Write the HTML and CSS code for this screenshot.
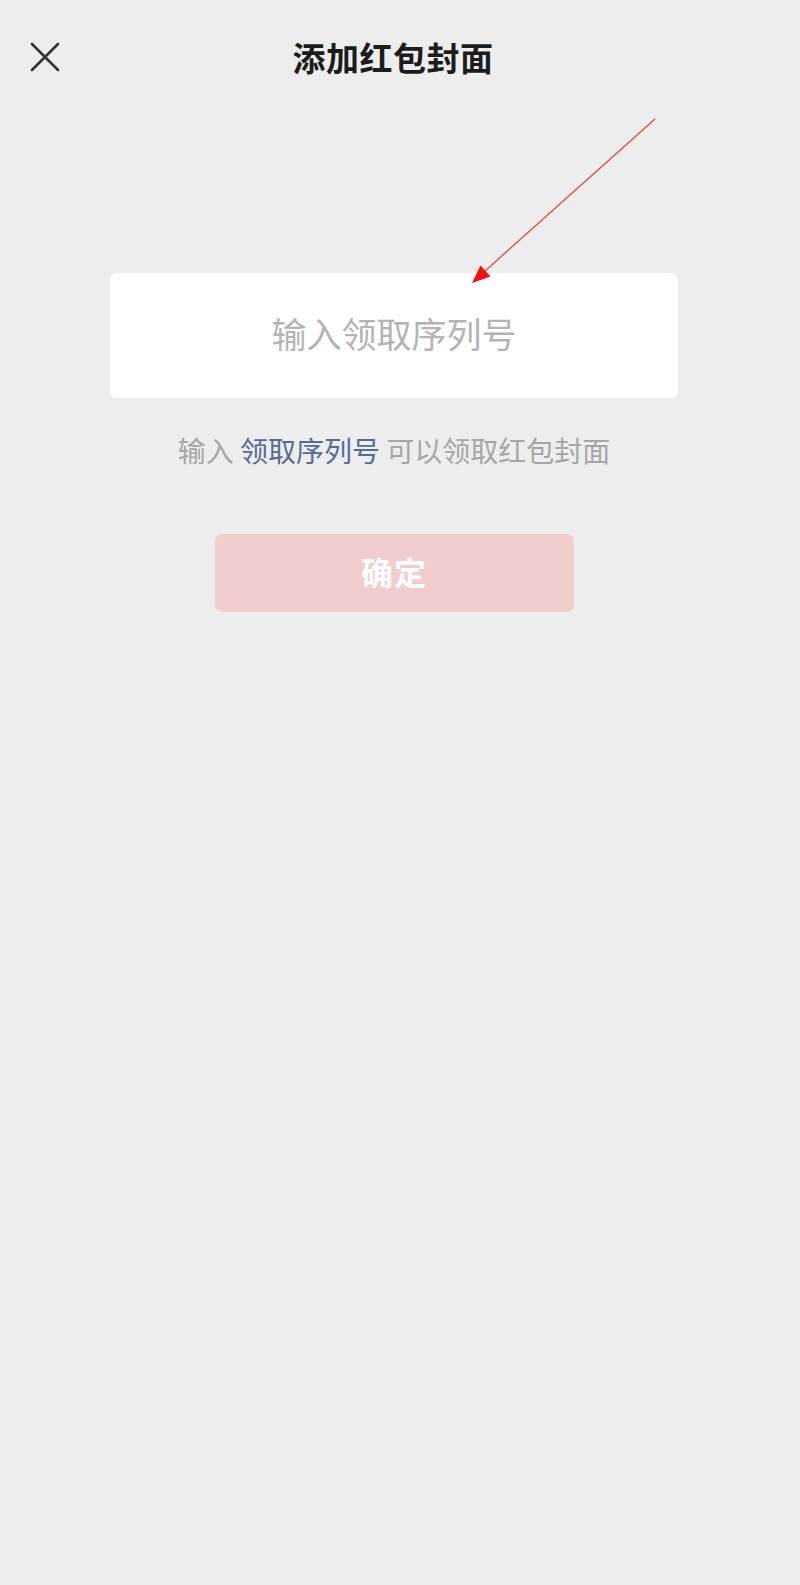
FILE: index.html
```html
<!DOCTYPE html>
<html lang="zh-CN">
<head>
<meta charset="utf-8">
<title>添加红包封面</title>
<link rel="stylesheet" href="styles.css">
</head>
<body>
<div class="page">
  <header class="nav">
    <button class="close" aria-label="关闭">
      <svg width="30" height="30" viewBox="0 0 30 30"><path d="M2 2 L28 28 M28 2 L2 28" stroke="#333" stroke-width="2.6" stroke-linecap="round" fill="none"/></svg>
    </button>
    <h1 class="title">添加红包封面</h1>
    <span></span>
  </header>
  <main class="content">
    <div class="field">
      <input class="code-input" type="text" placeholder="输入领取序列号">
    </div>
    <p class="hint">输入 <span class="link">领取序列号</span> 可以领取红包封面</p>
    <button class="confirm" disabled>确定</button>
  </main>
  <svg class="annotation" width="800" height="400" viewBox="0 0 800 400">
    <line x1="655" y1="119" x2="485" y2="271" stroke="#e64545" stroke-width="1.3"/>
    <polygon points="472,283 490.5,276.5 480.5,265.5" fill="#f01010"/>
  </svg>
</div>
</body>
</html>
```

FILE: styles.css
```css
html, body {
  margin: 0;
  padding: 0;
  background: #ededed;
}
body {
  font-family: "Noto Sans CJK SC", "Noto Sans", sans-serif;
}
.page {
  position: relative;
  width: 800px;
  min-height: 1585px;
  background: #ededed;
}
.nav {
  display: grid;
  grid-template-columns: 90px 1fr 104px;
  align-items: center;
  height: 114px;
}
.close {
  display: flex;
  align-items: center;
  justify-content: center;
  margin: 0 0 0 30px;
  padding: 0;
  width: 30px;
  height: 30px;
  border: 0;
  background: transparent;
}
.title {
  margin: 0;
  text-align: center;
  font-size: 33px;
  font-weight: 700;
  color: #1c1c1c;
  line-height: 40px;
  letter-spacing: 0.5px;
}
.content {
  display: flex;
  flex-direction: column;
  align-items: center;
  width: 568px;
  margin-left: 110px;
}
.field {
  box-sizing: border-box;
  width: 568px;
  height: 125px;
  margin-top: 159px;
  padding-bottom: 5px;
  background: #fff;
  border-radius: 7px;
  display: flex;
  align-items: center;
}
.code-input {
  width: 100%;
  border: 0;
  outline: none;
  background: transparent;
  text-align: center;
  font-family: "Noto Sans CJK SC", sans-serif;
  font-size: 35px;
  line-height: 44px;
  padding: 0;
  color: #333;
}
.code-input::placeholder {
  color: #b4b4b4;
}
.hint {
  margin: 34px 0 0;
  font-size: 28px;
  line-height: 36px;
  color: #a6a6a6;
  text-align: center;
  white-space: nowrap;
}
.link {
  color: #576b95;
}
.confirm {
  box-sizing: border-box;
  margin-top: 66px;
  width: 359px;
  height: 78px;
  border: 0;
  border-radius: 7px;
  background: #f1cdce;
  color: #fff;
  font-family: "Noto Sans CJK SC", sans-serif;
  font-size: 32px;
  font-weight: 700;
  letter-spacing: 1px;
  padding: 0 0 5px;
}
.annotation {
  position: absolute;
  left: 0;
  top: 0;
  pointer-events: none;
}
```
